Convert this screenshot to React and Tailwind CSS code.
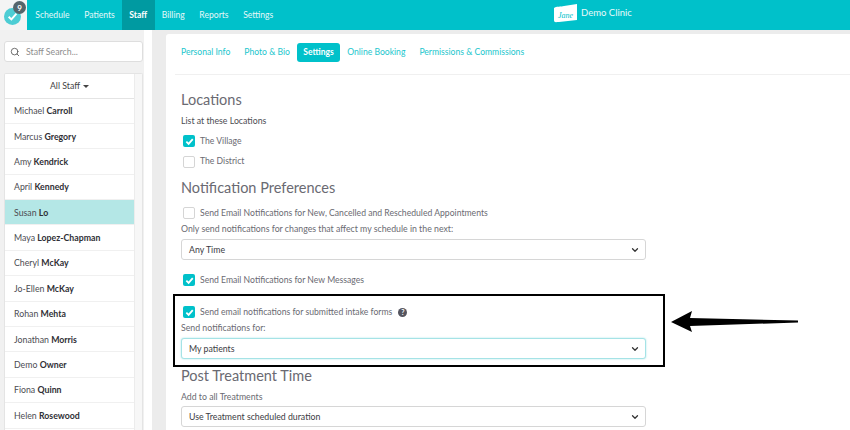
import React from "react";
import { Search, ChevronDown } from "lucide-react";

const NAV = ["Schedule", "Patients", "Staff", "Billing", "Reports", "Settings"];
const TABS = ["Personal Info", "Photo & Bio", "Settings", "Online Booking", "Permissions & Commissions"];
const STAFF = [
  ["Michael", "Carroll"],
  ["Marcus", "Gregory"],
  ["Amy", "Kendrick"],
  ["April", "Kennedy"],
  ["Susan", "Lo"],
  ["Maya", "Lopez-Chapman"],
  ["Cheryl", "McKay"],
  ["Jo-Ellen", "McKay"],
  ["Rohan", "Mehta"],
  ["Jonathan", "Morris"],
  ["Demo", "Owner"],
  ["Fiona", "Quinn"],
  ["Helen", "Rosewood"],
];

const Check = ({ on, label, h = "h-[20px]" }) => (
  <div className={`flex items-center gap-[5px] ${h}`}>
    {on ? (
      <span className="w-[12px] h-[12px] ml-[2px] rounded-[2px] bg-[#00c1ca] flex items-center justify-center">
        <svg width="9" height="9" viewBox="0 0 10 10" fill="none">
          <path d="M1.5 5.2 L4 7.6 L8.6 2.4" stroke="#fff" strokeWidth="2" />
        </svg>
      </span>
    ) : (
      <span className="w-[12px] h-[12px] ml-[2px] rounded-[2px] bg-white border border-[#d5d5d5]" />
    )}
    <span className="text-[8.65px] text-[#6a6a72]">{label}</span>
  </div>
);

const Select = ({ value, focus }) => (
  <div
    className={`w-[465px] h-[21px] rounded-[3px] bg-white flex items-center justify-between pl-[7px] pr-[5px] border ${
      focus ? "border-[#a5e3e6] shadow-[0_0_2px_#a5e3e6]" : "border-[#d6d6d6]"
    }`}
  >
    <span className="text-[8.75px] text-[#3c3c44]">{value}</span>
    <ChevronDown size={10} strokeWidth={3} className="text-[#333]" />
  </div>
);

export default function App() {
  return (
    <div className="relative w-[850px] h-[430px] overflow-hidden bg-[#ececec] font-['Lato','Open_Sans',sans-serif]">
      {/* top bar */}
      <div className="flex h-[30px] bg-[#f4f4f4]">
        <div className="relative w-[27px] h-[30px] flex items-center justify-center">
          <span className="w-[17px] h-[17px] ml-[-3px] mt-[2px] rounded-full bg-[#4dcdd4] flex items-center justify-center">
            <svg width="11" height="11" viewBox="0 0 10 10" fill="none">
              <path d="M1.5 5.2 L4 7.6 L8.6 2.4" stroke="#fff" strokeWidth="1.8" />
            </svg>
          </span>
          <span className="absolute left-[13px] top-[1px] w-[13px] h-[13px] rounded-full bg-[#55656b] text-white text-[8px] font-bold flex items-center justify-center">
            9
          </span>
        </div>
        <div className="relative flex-1 flex bg-[#00c1ca] pl-[1px]">
          {NAV.map((n) => (
            <div
              key={n}
              className={`h-[30px] px-[7.3px] flex items-center text-[8.6px] ${
                n === "Staff" ? "bg-[#009aa1] text-white font-bold" : "text-[#e4f8f9]"
              }`}
            >
              {n}
            </div>
          ))}
          <div className="absolute left-[526px] top-[3px] flex items-center gap-[3px]">
            <svg width="25" height="21" viewBox="0 0 25 21">
              <path d="M1 5 C3 3 8 4 11 3 L24 1 L24 17 L6 19 C3 19 1 20 1 17 Z" fill="#fff" />
              <text x="5" y="15" fontSize="8" fontStyle="italic" fontFamily="Liberation Serif, serif" fill="#00c1ca">
                Jane
              </text>
            </svg>
            <span className="text-[9.5px] text-[#e8fafa]">Demo Clinic</span>
          </div>
        </div>
      </div>

      <div className="flex">
        {/* sidebar */}
        <div className="w-[144px] h-[400px] bg-[#f1f1f1] pl-[4px] pr-[1px] pt-[11px] shrink-0">
          <div className="h-[21px] rounded-[3px] bg-white border border-[#dedede] flex items-center pl-[5px] gap-[6px]">
            <Search size={10} strokeWidth={2} className="text-[#555]" />
            <span className="text-[8.75px] text-[#8e8e8e]">Staff Search...</span>
          </div>
          <div className="mt-[11px] flex bg-white rounded-t-[2px] border border-[#e4e4e4] border-b-0 h-[400px]">
            <div className="w-[129px]">
              <div className="h-[24.5px] flex items-center justify-center gap-[3px] border-b border-[#e4e4e4] text-[8.75px] text-[#444]">
                All Staff
                <span className="w-0 h-0 mt-[1px] border-x-[3px] border-x-transparent border-t-[3px] border-t-[#444]" />
              </div>
              {STAFF.map(([first, last]) => (
                <div
                  key={last + first}
                  className={`h-[25.4px] flex items-center pl-[9px] text-[8.75px] text-[#4c4c52] border-b border-[#f0f0f0] ${
                    last === "Lo" ? "bg-[#b4e7e6]" : ""
                  }`}
                >
                  {first}&nbsp;<b className="text-[#2f2f35]">{last}</b>
                </div>
              ))}
            </div>
            <div className="flex-1 bg-[#f7f7f7] border-l border-[#ececec]" />
          </div>
        </div>

        <div className="w-[8px] bg-white shrink-0" />

        {/* main card */}
        <div className="mt-[4px] ml-[14px] flex-1 bg-white rounded-tl-[3px] pl-[15px]">
          <div className="flex items-start gap-[14px] h-[41px] pt-[9px] border-b border-[#f0f0f0] ml-[-6px] pl-[6px]">
            {TABS.map((t) =>
              t === "Settings" ? (
                <span key={t} className="h-[19px] px-[6.5px] mx-[-7px] rounded-[3px] bg-[#00c1ca] text-white font-bold text-[8.5px] flex items-center">
                  {t}
                </span>
              ) : (
                <span key={t} className="h-[19px] flex items-center text-[8.6px] text-[#22c6cd]">
                  {t}
                </span>
              )
            )}
          </div>

          <h2 className="mt-[15px] text-[14.5px] leading-[20px] text-[#6a6a72]">Locations</h2>
          <div className="mt-[5px] text-[8.75px] leading-[12px] text-[#4c4c52]">List at these Locations</div>
          <div className="mt-[4px]">
            <Check on label="The Village" h="h-[20.5px]" />
            <Check label="The District" h="h-[20.5px]" />
          </div>

          <h2 className="mt-[6px] text-[14.5px] leading-[20px] text-[#6a6a72]">Notification Preferences</h2>
          <div className="mt-[5px]">
            <Check label="Send Email Notifications for New, Cancelled and Rescheduled Appointments" />
          </div>
          <div className="text-[8.75px] leading-[12px] text-[#6a6a72]">
            Only send notifications for changes that affect my schedule in the next:
          </div>
          <div className="mt-[4px]">
            <Select value="Any Time" />
          </div>
          <div className="mt-[10px]">
            <Check on label="Send Email Notifications for New Messages" />
          </div>

          <div className="mt-[12px] flex items-center gap-[6px]">
            <Check on label="Send email notifications for submitted intake forms" />
            <span className="w-[9px] h-[9px] rounded-full bg-[#55555f] text-white text-[7px] font-bold flex items-center justify-center">
              ?
            </span>
          </div>
          <div className="text-[8.75px] leading-[12px] text-[#6a6a72]">Send notifications for:</div>
          <div className="mt-[4px]">
            <Select value="My patients" focus />
          </div>

          <h2 className="mt-[7px] text-[14.5px] leading-[20px] text-[#6a6a72]">Post Treatment Time</h2>
          <div className="mt-[5px] text-[8.75px] leading-[12px] text-[#6a6a72]">Add to all Treatments</div>
          <div className="mt-[3px]">
            <Select value="Use Treatment scheduled duration" />
          </div>
        </div>
      </div>

      {/* annotation over the screenshot */}
      <div className="absolute left-[173px] top-[294px] w-[492px] h-[73px] border-2 border-black" />
      <svg className="absolute left-[668px] top-[305px]" width="135" height="35" viewBox="0 0 135 35">
        <path d="M3 17 L24 6 L22 13 L130 15.5 L130 17.5 L22 21 L24 27 Z" fill="#000" />
      </svg>
    </div>
  );
}
